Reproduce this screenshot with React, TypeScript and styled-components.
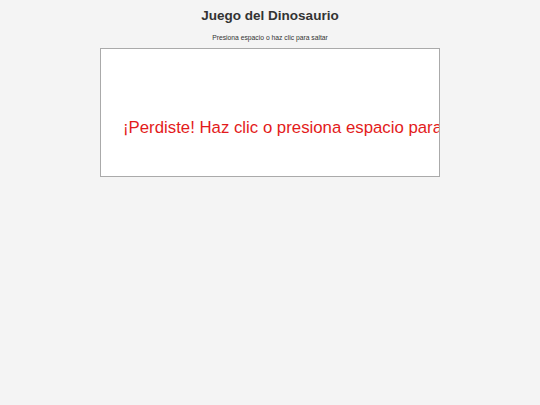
import React from "react"
import styled, { createGlobalStyle } from "styled-components"

const GlobalStyle = createGlobalStyle`
    html, body {
        margin: 0;
        padding: 0;
        background: #f4f4f4;
        font-family: "Liberation Sans", Arial, sans-serif;
    }
`

const Page = styled.main`
    display: flex;
    flex-direction: column;
    align-items: center;
    width: 540px;
    min-height: 405px;
`

const Title = styled.h1`
    margin: 8px 0 0;
    font-size: 13.5px;
    line-height: 16px;
    font-weight: bold;
    color: #333;
`

const Subtitle = styled.p`
    margin: 10px 0 0;
    font-size: 6.75px;
    line-height: 8px;
    color: #333;
`

const GameCanvas = styled.div`
    box-sizing: border-box;
    margin-top: 6px;
    width: 340px;
    height: 129px;
    background: #fff;
    border: 1px solid #aaa;
    overflow: hidden;
    padding: 70px 0 0 22px;
`

const GameOver = styled.div`
    white-space: nowrap;
    font-size: 16.8px;
    line-height: 18px;
    color: #e31b1b;
`

export default function App() {
    return (
        <>
            <GlobalStyle />
            <Page>
                <Title>Juego del Dinosaurio</Title>
                <Subtitle>Presiona espacio o haz clic para saltar</Subtitle>
                <GameCanvas>
                    <GameOver>¡Perdiste! Haz clic o presiona espacio para reiniciar</GameOver>
                </GameCanvas>
            </Page>
        </>
    )
}
